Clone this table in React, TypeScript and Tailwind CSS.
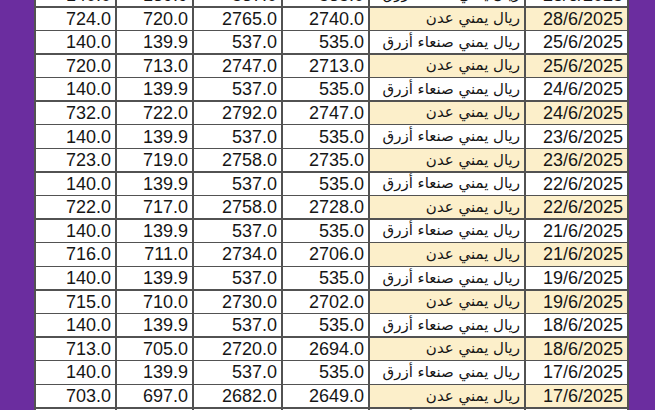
const SANAA = 'ريال يمني صنعاء أزرق';
const ADEN = 'ريال يمني عدن';

type Row = { vals: string[]; name: string; date: string; aden: boolean };

const s = (date: string): Row => ({ vals: ['140.0', '139.9', '537.0', '535.0'], name: SANAA, date, aden: false });
const a = (date: string, vals: string[]): Row => ({ vals, name: ADEN, date, aden: true });

const rows: Row[] = [
  s('28/6/2025'),
  a('28/6/2025', ['724.0', '720.0', '2765.0', '2740.0']),
  s('25/6/2025'),
  a('25/6/2025', ['720.0', '713.0', '2747.0', '2713.0']),
  s('24/6/2025'),
  a('24/6/2025', ['732.0', '722.0', '2792.0', '2747.0']),
  s('23/6/2025'),
  a('23/6/2025', ['723.0', '719.0', '2758.0', '2735.0']),
  s('22/6/2025'),
  a('22/6/2025', ['722.0', '717.0', '2758.0', '2728.0']),
  s('21/6/2025'),
  a('21/6/2025', ['716.0', '711.0', '2734.0', '2706.0']),
  s('19/6/2025'),
  a('19/6/2025', ['715.0', '710.0', '2730.0', '2702.0']),
  s('18/6/2025'),
  a('18/6/2025', ['713.0', '705.0', '2720.0', '2694.0']),
  s('17/6/2025'),
  a('17/6/2025', ['703.0', '697.0', '2682.0', '2649.0']),
  s('16/6/2025'),
];

const cell = 'flex items-center justify-end pr-[4px] leading-none';

export default function App() {
  return (
    <div
      className="flex h-[410px] w-[655px] overflow-hidden bg-[#6b2d9f] text-[#161616]"
      style={{ fontFamily: '"Liberation Sans", Arial, "DejaVu Sans", sans-serif' }}
    >
      <div className="w-[34px] shrink-0" />
      <div className="w-[594.5px] shrink-0 self-start -mt-[16.1px] bg-[#525252] px-[1.5px]">
        <div className="grid grid-cols-[79.5px_75.5px_87.5px_85.5px_154.5px_101.5px] auto-rows-[22.1px] gap-[1.5px]">
          {rows.map((r, i) => (
            <div key={i} className="contents">
              {r.vals.map((v, j) => (
                <div key={j} className={`${cell} bg-white text-[18px]`}>
                  {v}
                </div>
              ))}
              <div
                dir="rtl"
                className={`flex items-center justify-start pr-[4px] leading-none text-[15px] ${r.aden ? 'bg-[#fcefca]' : 'bg-white'}`}
                style={{ fontFamily: '"DejaVu Sans", sans-serif' }}
              >
                {r.name}
              </div>
              <div className={`${cell} text-[18px] ${r.aden ? 'bg-[#fcefca]' : 'bg-white'}`}>{r.date}</div>
            </div>
          ))}
        </div>
      </div>
      <div className="flex-1" />
    </div>
  );
}
